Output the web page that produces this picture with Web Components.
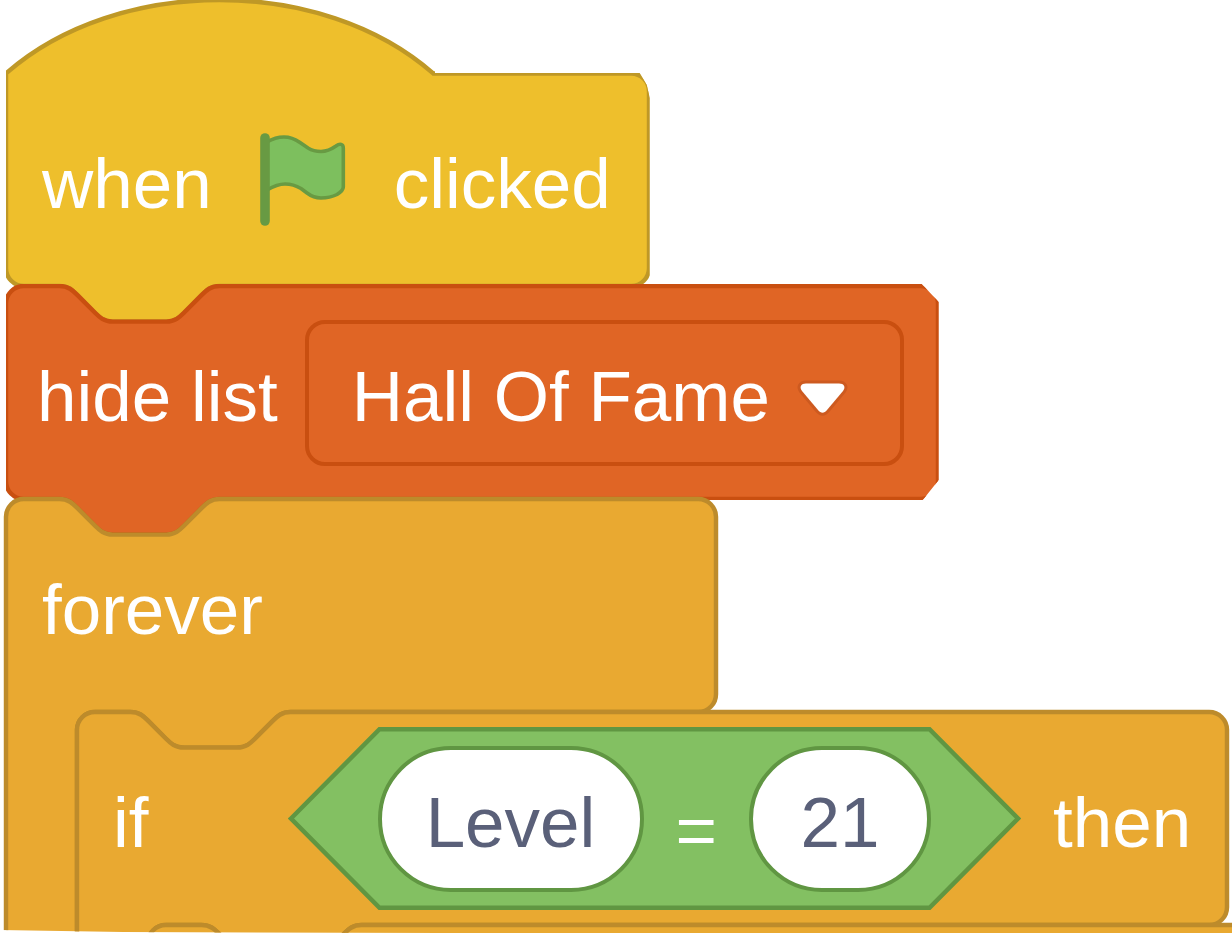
<!DOCTYPE html>
<html lang="en">
<head>
<meta charset="utf-8">
<title>Block script</title>
<style>
  html, body { margin: 0; background: #fff; }
  body { font-family: "Liberation Sans", Arial, Helvetica, sans-serif; font-size: 71px; line-height: 80px; color: #fff; }
</style>
</head>
<body>
<script-canvas>
  <code-block kind="event" hat>
    <block-label>when</block-label>
    <green-flag></green-flag>
    <block-label>clicked</block-label>
  </code-block>
  <code-block kind="list">
    <block-label>hide list</block-label>
    <block-menu label="list" value="Hall Of Fame"></block-menu>
  </code-block>
  <code-block kind="control" wrap>
    <block-label>forever</block-label>
    <code-block slot="mouth" kind="control" class="if" wrap>
      <block-label>if</block-label>
      <equals-operator>
        <block-input label="Left value" value="Level"></block-input>
        <block-label>=</block-label>
        <block-input label="Right value" value="21" short></block-input>
      </equals-operator>
      <block-label>then</block-label>
      <code-block slot="mouth" kind="control" class="long"></code-block>
    </code-block>
  </code-block>
</script-canvas>

<script>
const U = 4.45; // pixels per block-grid unit

// Turns "c 2 0 3 1 4 2" grid-unit segments into pixel path data.
const seg = (s) => s.replace(/-?\d+(\.\d+)?/g, (n) => (n * U).toFixed(2));
const NOTCH = seg('c 2 0 3 1 4 2 l 4 4 c 1 1 2 2 4 2 h 12 c 2 0 3 -1 4 -2 l 4 -4 c 1 -1 2 -2 4 -2');
const TAB = seg('c -2 0 -3 1 -4 2 l -4 4 c -1 1 -2 2 -4 2 h -12 c -2 0 -3 -1 -4 -2 l -4 -4 c -1 -1 -2 -2 -4 -2');
const R = 4 * U;
const RAIL = 71;

const define = (name, html, extra = {}) => {
  const template = document.createElement('template');
  template.innerHTML = html;
  customElements.define(name, class extends HTMLElement {
    constructor() {
      super();
      this.attachShadow({ mode: 'open' }).append(template.content.cloneNode(true));
    }
    connectedCallback() { if (extra.connected) extra.connected(this, this.shadowRoot); }
  });
};

define('script-canvas', `
  <style>
    :host {
      display: flex; flex-direction: column; align-items: flex-start;
      box-sizing: border-box; height: 100vh; overflow: hidden; padding-left: 6px;
      clip-path: polygon(0 0, 100% 0, 100% 100%, 36% 100%, 10% calc(100% - 1px), 0 calc(100% - 3px));
    }
  </style>
  <slot></slot>`);

define('block-label', `
  <style>:host { display: block; padding-top: 8px; white-space: nowrap; }</style>
  <slot></slot>`);

define('green-flag', `
  <style>:host { display: block; margin: 0 14px; } svg { display: block; width: 90px; height: 93px; }</style>
  <svg viewBox="0 3 90 93" role="img" aria-label="green flag">
    <path d="M9 12C14 9 20 7 26 7C32 7 37 9 42 12.500L50 18C54 20.500 58 21.500 63 21.500C69 21.500 73 19.500 78 16C82 13 85.300 14 85.300 18V57C85.300 60 83 62 79 64.500C74 67 69 68 63 68C57 68 53 66 49 63L43 58.500C38 55.500 33 54 27 54C20 54 15 56.500 9 60Z" fill="#7dbf5e" stroke="#689a43" stroke-width="3.600"/>
    <path d="M7 8V91" stroke="#689a43" stroke-width="9.600" stroke-linecap="round"/>
  </svg>`);

define('block-menu', `
  <style>
    :host { display: block; position: relative; }
    select {
      appearance: none; display: block; box-sizing: border-box; height: 146px; margin: 0;
      padding: 8px 129px 0 43px; border: 4px solid #c94f10; border-radius: 20px;
      background: transparent; color: #fff; font: inherit; outline: 0;
    }
    svg { position: absolute; right: 56px; top: 58px; width: 52px; height: 40px; pointer-events: none; }
  </style>
  <select><option></option></select>
  <svg viewBox="0 0 52 40" aria-hidden="true">
    <path d="M10 5.500H43C48 5.500 50 9 47 13L31 32C28 35.500 25 35.500 22 32L6 13C3 9 5 5.500 10 5.500Z" fill="none" stroke="#cd5a20" stroke-width="6"/>
    <path d="M10 5.500H43C48 5.500 50 9 47 13L31 32C28 35.500 25 35.500 22 32L6 13C3 9 5 5.500 10 5.500Z" fill="#fff"/>
  </svg>`, {
  connected(host, root) {
    const select = root.querySelector('select');
    select.setAttribute('aria-label', host.getAttribute('label'));
    root.querySelector('option').textContent = host.getAttribute('value');
  }
});

define('block-input', `
  <style>
    :host { display: block; }
    input {
      display: block; box-sizing: border-box; width: 266px; height: 146px; margin: 0; padding: 8px 0 0;
      border: 4px solid #609642; border-radius: 73px; background: #fff; color: #5a6079;
      font: inherit; text-align: center; outline: 0;
    }
    :host([short]) input { width: 182px; }
  </style>
  <input type="text">`, {
  connected(host, root) {
    const input = root.querySelector('input');
    input.setAttribute('aria-label', host.getAttribute('label'));
    input.value = host.getAttribute('value');
  }
});

// Draws the outline of a shape once its content has a size, and again when that size changes.
const watch = (host, draw) => { draw(); new ResizeObserver(draw).observe(host); };

define('equals-operator', `
  <style>
    :host { display: flex; align-items: center; gap: 32px; position: relative; box-sizing: border-box; height: 183px; padding: 0 90px; margin-left: 107px; }
    ::slotted(block-label) { padding-top: 24px; }
    svg { position: absolute; inset: 0; width: 100%; height: 100%; z-index: -1; }
    path { fill: #83c062; stroke: #609642; stroke-width: 4.45px; }
  </style>
  <svg aria-hidden="true"><path/></svg>
  <slot></slot>`, {
  connected(host, root) {
    watch(host, () => {
      const w = host.offsetWidth, h = host.offsetHeight, m = h / 2, e = 2.2;
      root.querySelector('path').setAttribute('d',
        `M3 ${m}L${m} ${e}H${w - m}L${w - 3} ${m}L${w - m} ${h - e}H${m}Z`);
    });
  }
});

define('code-block', `
  <style>
    :host { display: block; position: relative; isolation: isolate; --fill: #e9a931; --line: #bd8b2b; }
    :host([kind=event]) { --fill: #eebf2c; --line: #bf9826; }
    :host([kind=list]) { --fill: #e06525; --line: #c94f10; }
    :host([wrap]) .head { min-width: 710px; }
    :host(.long) .head { min-width: 1280px; }
    .head { display: flex; align-items: center; gap: 32px; box-sizing: border-box; width: fit-content; height: 213px; padding: 0 36px; }
    :host([hat]) .head { height: 286px; padding-top: 73px; padding-right: 38px; }
    :host([kind=list]) .head { gap: 27px; padding-left: 31px; padding-right: 34px; }
    .mouth { padding-left: ${RAIL}px; }
    svg { position: absolute; left: 0; top: 0; width: 100%; height: 100%; overflow: visible; z-index: -1; }
    path { fill: var(--fill); stroke: var(--line); stroke-width: 4.45px; }
    :host([kind=list]) svg { clip-path: polygon(0 -2px, calc(100% - 16px) -2px, calc(100% + 1px) 16px, calc(100% + 1px) calc(100% - 19px), calc(100% - 15px) calc(100% + 1px), 60% calc(100% + 1px), 60% 130%, 0 130%); }
    :host([hat]) svg { clip-path: polygon(0 0, 429px 0, 429px 73px, calc(100% - 9px) 73px, calc(100% - 2px) 85px, calc(100% + 1px) 98px, calc(100% + 1px) 130%, 0 130%); }
  </style>
  <svg aria-hidden="true"><path/></svg>
  <div class="head"><slot></slot></div>
  <div class="mouth"><slot name="mouth"></slot></div>`, {
  connected(host, root) {
    const head = root.querySelector('.head');
    watch(host, () => {
      const w = head.offsetWidth, h = head.offsetHeight, full = host.offsetHeight;
      const y = 16.5 * U;
      const top = host.hasAttribute('hat')
        ? `M0 ${y}${seg('c 25 -22 71 -22 96 0')}H${w - R}a${R} ${R} 0 0 1 ${R} ${R}`
        : `M0 ${R}a${R} ${R} 0 0 1 ${R} ${-R}H${12 * U}${NOTCH}H${w - R}a${R} ${R} 0 0 1 ${R} ${R}`;
      const right = `V${h - R}a${R} ${R} 0 0 1 ${-R} ${R}`;
      const bottom = host.hasAttribute('wrap')
        ? `H${RAIL + 48 * U}${TAB}H${RAIL + R}a${R} ${R} 0 0 0 ${-R} ${R}V${full}H0Z`
        : `H${48 * U}${TAB}H${R}a${R} ${R} 0 0 1 ${-R} ${-R}Z`;
      root.querySelector('path').setAttribute('d', top + right + bottom);
    });
  }
});
</script>
</body>
</html>
